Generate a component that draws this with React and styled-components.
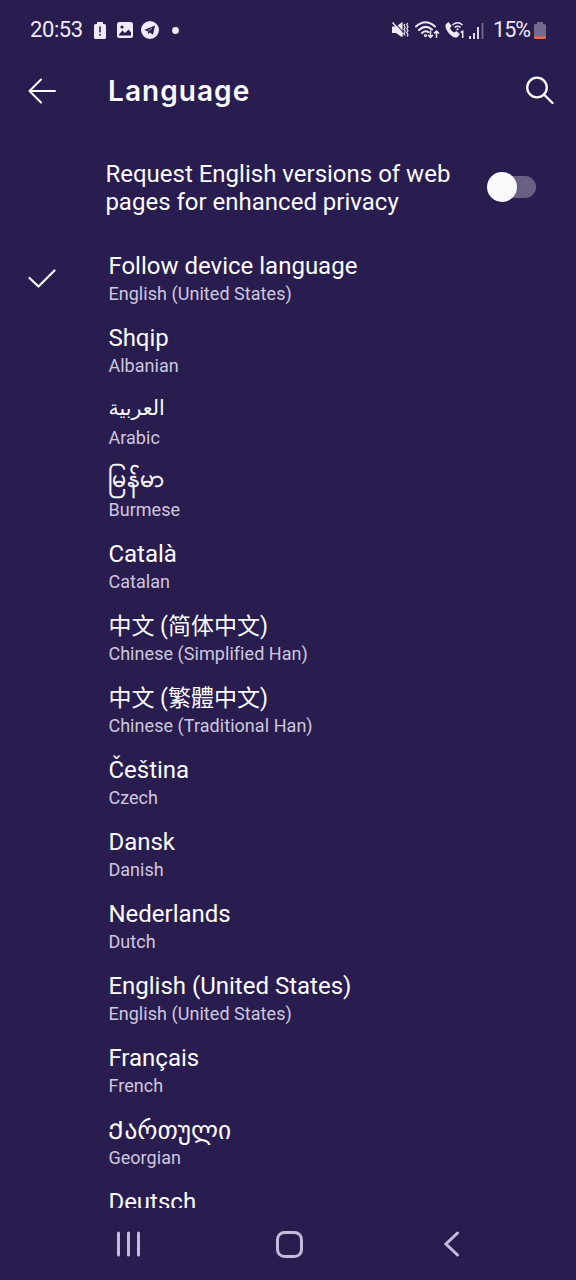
import React, { useState } from 'react';
import styled, { createGlobalStyle } from 'styled-components';

const GlobalStyle = createGlobalStyle`
  body {
    margin: 0;
    background: #291d4f;
  }
`;

const Screen = styled.div`
  display: flex;
  flex-direction: column;
  width: 576px;
  height: 1280px;
  overflow: hidden;
  background: #291d4f;
  color: #fbfbfe;
  font-family: Roboto, "Noto Sans", "Noto Sans CJK SC", "DejaVu Sans", sans-serif;
`;

const StatusBar = styled.header`
  display: flex;
  align-items: center;
  justify-content: space-between;
  flex: none;
  height: 60px;
  padding: 0 30px 0 30px;
  box-sizing: border-box;
  color: #f0eaf8;
`;

const StatusGroup = styled.div`
  display: flex;
  align-items: center;
`;

const StatusText = styled.span`
  width: ${(props) => props.$width}px;
  margin-left: ${(props) => props.$gap || 0}px;
  font-size: ${(props) => props.$size}px;
  line-height: 26px;
  letter-spacing: ${(props) => props.$spacing}px;
  white-space: nowrap;
`;

const StatusIcon = styled.svg`
  display: block;
  flex: none;
  margin-left: ${(props) => props.$gap}px;
`;

const AppBar = styled.div`
  display: flex;
  align-items: center;
  flex: none;
  height: 72px;
  padding: 0 22px 0 28px;
  box-sizing: border-box;
  border-bottom: 1px solid #271b49;
`;

const IconButton = styled.button`
  display: flex;
  padding: 0;
  border: none;
  background: none;
  color: #fbfbfe;
  cursor: pointer;
`;

const Title = styled.h1`
  flex: 1;
  margin: 0 0 0 52px;
  padding-bottom: 10px;
  font-family: Inter, sans-serif;
  font-size: 28px;
  font-weight: 600;
  line-height: 36px;
  letter-spacing: 1.05px;
`;

const PrivacyRow = styled.div`
  display: flex;
  align-items: center;
  justify-content: space-between;
  flex: none;
  height: 111px;
  padding: 0 40px 1px 105.400px;
  box-sizing: border-box;
`;

const PrivacyText = styled.p`
  width: 352px;
  margin: 2px 0 0;
  font-size: 24px;
  line-height: 28px;
  white-space: nowrap;
`;

const Track = styled.button`
  display: flex;
  align-items: center;
  justify-content: ${(props) => (props.$on ? 'flex-end' : 'flex-start')};
  width: 46px;
  height: 22px;
  padding: 0;
  border: none;
  border-radius: 11px;
  background: #6a6085;
  cursor: pointer;
`;

const Thumb = styled.span`
  flex: none;
  width: 30px;
  height: 30px;
  margin: 0 -3px;
  border-radius: 50%;
  background: #f9f8fa;
`;

const LanguageList = styled.ul`
  flex: 1;
  min-height: 0;
  margin: 0;
  padding: 0;
  overflow: hidden;
  list-style: none;
`;

const LanguageRow = styled.li`
  display: grid;
  grid-template-columns: 108.400px 1fr;
  align-items: center;
  height: 72px;
  cursor: pointer;
`;

const CheckSlot = styled.div`
  padding: 3px 0 0 28px;
`;

const NativeName = styled.div`
  height: 28px;
  margin-top: -2px;
  font-size: ${(props) => props.$size || 24}px;
  line-height: ${(props) => props.$line || 28}px;
  letter-spacing: ${(props) => props.$spacing || 0}px;
  -webkit-text-stroke: ${(props) => props.$stroke || 0}px currentColor;
  white-space: nowrap;
`;

const EnglishName = styled.div`
  height: 22px;
  margin-top: 3px;
  color: #cfc7df;
  font-size: 18px;
  line-height: 22px;
  letter-spacing: 0.05px;
`;

const NavBar = styled.nav`
  display: flex;
  align-items: center;
  justify-content: space-between;
  flex: none;
  height: 72px;
  padding: 0 116px;
  box-sizing: border-box;
  color: #c5b9dc;
`;

const HomeIcon = styled.svg`
  margin-right: 6px;
`;

const languages = [
  { native: 'Follow device language', english: 'English (United States)' },
  { native: 'Shqip', english: 'Albanian' },
  { native: 'العربية', english: 'Arabic', lang: 'ar', size: 20.6, line: 25 },
  { native: 'မြန်မာ', english: 'Burmese', lang: 'my', size: 24.6, spacing: 0.7, stroke: 0.6, line: 21 },
  { native: 'Català', english: 'Catalan' },
  { native: '中文 (简体中文)', english: 'Chinese (Simplified Han)', lang: 'zh-Hans', size: 23, line: 30 },
  { native: '中文 (繁體中文)', english: 'Chinese (Traditional Han)', lang: 'zh-Hant', size: 23, line: 30 },
  { native: 'Čeština', english: 'Czech' },
  { native: 'Dansk', english: 'Danish' },
  { native: 'Nederlands', english: 'Dutch' },
  { native: 'English (United States)', english: 'English (United States)' },
  { native: 'Français', english: 'French' },
  { native: 'Ქართული', english: 'Georgian', lang: 'ka', size: 25.4 },
  { native: 'Deutsch', english: 'German' },
];

const StatusIconsLeft = () => (
  <>
    <StatusIcon $gap={0} width="12" height="17" viewBox="0 0 12 17">
      <path fill="currentColor" fillRule="evenodd" d="M3 0h6v2h1.500Q12 2 12 3.500v12q0 1.500-1.500 1.500h-9Q0 17 0 15.500v-12Q0 2 1.500 2H3zM5.200 4.500v6h1.600v-6zM5.200 12v1.700h1.600V12z" />
    </StatusIcon>
    <StatusIcon $gap={11} width="16" height="16" viewBox="0 0 16 16">
      <rect width="16" height="16" rx="2.500" fill="currentColor" />
      <circle cx="5" cy="5" r="1.600" fill="#291d4f" />
      <path d="M2 12.500 5.500 8.500 8 11 11.500 7.500 14 10.500V13.500H2z" fill="#291d4f" />
    </StatusIcon>
    <StatusIcon $gap={8} width="18" height="18" viewBox="0 0 18 18">
      <circle cx="9" cy="9" r="9" fill="currentColor" />
      <path d="M3.200 9 14 4.500 12 13.800 8.800 11.400 7.300 13 6.700 10.200z" fill="#291d4f" />
      <path d="m7.200 10.200 3.800-3" stroke="#f0eaf8" strokeWidth=".7" fill="none" />
    </StatusIcon>
    <StatusIcon $gap={13} width="7" height="7" viewBox="0 0 7 7">
      <circle cx="3.500" cy="3.500" r="3.400" fill="currentColor" />
    </StatusIcon>
  </>
);

const StatusIconsRight = () => (
  <>
    <StatusIcon $gap={0} width="17" height="18" viewBox="0 0 17 18">
      <path fill="currentColor" d="M0 5.500h4L10.500 1v15.500L4 12H0z" />
      <path d="M2 1 11.500 11.500" stroke="#291d4f" strokeWidth="1.100" />
      <path d="M.5 1.500 11 13.500" stroke="currentColor" strokeWidth="1.500" />
      <path d="m12.800 3-.8 1.500 1.200 2-1.200 2 1.200 2-1.200 2 1 2M15.600 2l-.8 1.800 1.200 2-1.200 2 1.200 2-1.200 2 1.200 2-.8 1.800" fill="none" stroke="currentColor" strokeWidth="1.200" />
    </StatusIcon>
    <StatusIcon $gap={6} width="25" height="18" viewBox="0 0 25 18">
      <g fill="none" stroke="currentColor" strokeWidth="2" strokeLinecap="round">
        <path d="M1 5.500Q10.500-3 20 5.500M4 9Q10.500 3 17 8.500M7 12q3.500-3 6.500-.800" />
        <circle cx="10.500" cy="14.500" r=".6" />
      </g>
      <path d="M15.500 9.500V16M13 14l2.500 2.500L18 14M21.500 17v-6.500M19 12.500l2.500-2.500 2.500 2.500" fill="none" stroke="currentColor" strokeWidth="1.500" />
    </StatusIcon>
    <StatusIcon $gap={5} width="20" height="18" viewBox="0 0 20 18">
      <path fill="currentColor" d="M.8 3.200 3.500 1 6.700 5 4.900 7.200q1.500 3.200 4.400 4.400l2-1.600 3.500 2.900-2.200 3Q9 17.800 4.300 12.800-.7 7 .8 3.200z" />
      <path d="M7.500 4Q12.500-.5 17.500 4M9.700 6.500Q12.500 4 15.500 6.500" fill="none" stroke="currentColor" strokeWidth="1.600" />
      <circle cx="12.500" cy="8.300" r="1.100" fill="currentColor" />
      <path d="m15.700 11.500 2-1.200V17" fill="none" stroke="currentColor" strokeWidth="1.500" />
    </StatusIcon>
    <StatusIcon $gap={4} width="15" height="17" viewBox="0 0 15 17">
      <path d="M1 17v-3M5 17v-6M9 17V5" stroke="currentColor" strokeWidth="1.800" />
      <path d="M13.500 17V1" stroke="#746a8f" strokeWidth="1.800" />
    </StatusIcon>
  </>
);

const App = () => {
  const [isPrivate, setIsPrivate] = useState(false);
  const [selected, setSelected] = useState(0);

  return (
    <>
      <GlobalStyle />
      <Screen>
        <StatusBar>
          <StatusGroup>
            <StatusText $width={63.5} $size={22} $spacing={-0.4}>20:53</StatusText>
            <StatusIconsLeft />
          </StatusGroup>
          <StatusGroup>
            <StatusIconsRight />
            <StatusText $width={40} $gap={9} $size={21.5} $spacing={-0.9}>15%</StatusText>
            <StatusIcon $gap={1} width="12" height="17" viewBox="0 0 12 17">
              <path fill="#746a8f" d="M3 0h6v2h1.500Q12 2 12 3.500V15H0V3.500Q0 2 1.500 2H3z" />
              <path fill="#eb6548" d="M0 14.500h12v1q0 1.500-1.500 1.500h-9Q0 17 0 15.500z" />
            </StatusIcon>
          </StatusGroup>
        </StatusBar>

        <AppBar>
          <IconButton aria-label="Back">
            <svg width="28" height="38" viewBox="0 0 28 38" fill="none" stroke="currentColor" strokeWidth="2" strokeLinecap="round" strokeLinejoin="round">
              <path d="M13 2.500 1.500 14 13 25.500M1.500 14H27" />
            </svg>
          </IconButton>
          <Title>Language</Title>
          <IconButton aria-label="Search">
            <svg width="28" height="40" viewBox="0 0 28 40" fill="none" stroke="currentColor" strokeWidth="2.300" strokeLinecap="round">
              <circle cx="11" cy="11.500" r="9.800" />
              <path d="m18 18.500 8.500 8.500" />
            </svg>
          </IconButton>
        </AppBar>

        <PrivacyRow>
          <PrivacyText>
            Request English versions of web
            <br />
            pages for enhanced privacy
          </PrivacyText>
          <Track $on={isPrivate} role="switch" aria-checked={isPrivate} onClick={() => setIsPrivate(!isPrivate)}>
            <Thumb />
          </Track>
        </PrivacyRow>

        <LanguageList>
          {languages.map((language, index) => (
            <LanguageRow key={language.native} onClick={() => setSelected(index)}>
              <CheckSlot>
                {selected === index && (
                  <svg width="28" height="20" viewBox="0 0 28 20" fill="none" stroke="currentColor" strokeWidth="2.200" strokeLinecap="round" strokeLinejoin="round">
                    <path d="M1.500 9 10.500 17.500 26.500 1.500" />
                  </svg>
                )}
              </CheckSlot>
              <div>
                <NativeName
                  lang={language.lang}
                  $size={language.size}
                  $line={language.line}
                  $spacing={language.spacing}
                  $stroke={language.stroke}
                >
                  {language.native}
                </NativeName>
                <EnglishName>{language.english}</EnglishName>
              </div>
            </LanguageRow>
          ))}
        </LanguageList>

        <NavBar>
          <svg width="25" height="26" viewBox="0 0 25 26" stroke="currentColor" strokeWidth="3" strokeLinecap="round">
            <path d="M2.500 2v22M12.500 2v22M22.500 2v22" />
          </svg>
          <HomeIcon width="27" height="27" viewBox="0 0 27 27" fill="none" stroke="currentColor" strokeWidth="3">
            <rect x="1.500" y="1.500" width="24" height="24" rx="7" />
          </HomeIcon>
          <svg width="16" height="26" viewBox="0 0 16 26" fill="none" stroke="currentColor" strokeWidth="3" strokeLinecap="round">
            <path d="M13.500 2 2 13l11.500 11" />
          </svg>
        </NavBar>
      </Screen>
    </>
  );
};

export default App;
